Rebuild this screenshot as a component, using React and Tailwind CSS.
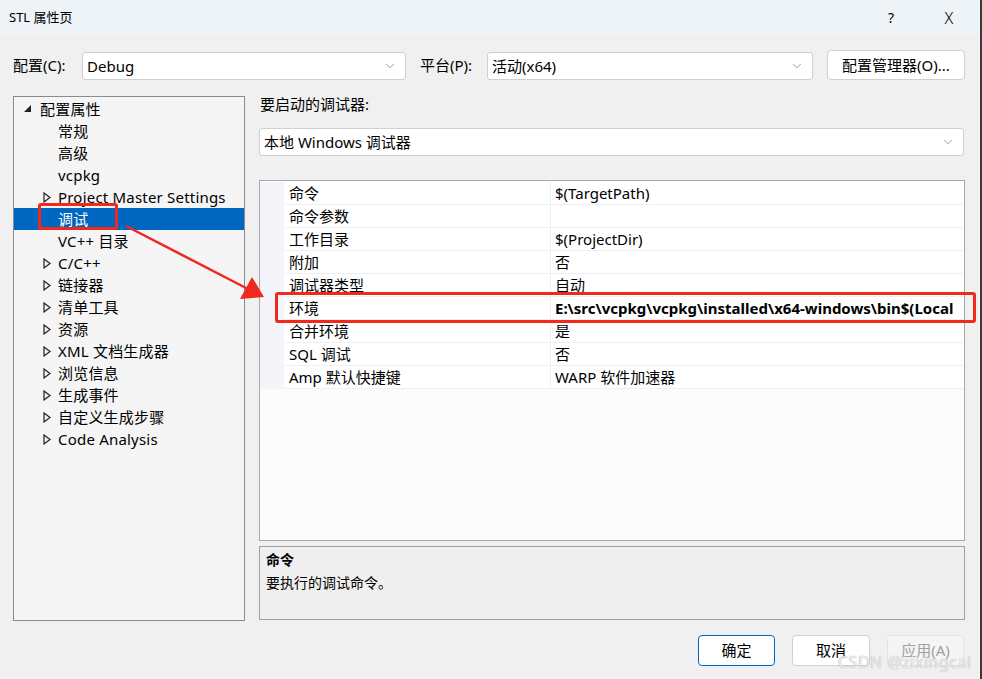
import React from "react";
import { ChevronDown } from "lucide-react";

const font = { fontFamily: '"Noto Sans", "Noto Sans CJK SC", sans-serif' };

const treeItems = [
  { label: "配置属性", level: 0, open: true },
  { label: "常规" },
  { label: "高级" },
  { label: "vcpkg" },
  { label: "Project Master Settings", arrow: true },
  { label: "调试", selected: true },
  { label: "VC++ 目录" },
  { label: "C/C++", arrow: true },
  { label: "链接器", arrow: true },
  { label: "清单工具", arrow: true },
  { label: "资源", arrow: true },
  { label: "XML 文档生成器", arrow: true },
  { label: "浏览信息", arrow: true },
  { label: "生成事件", arrow: true },
  { label: "自定义生成步骤", arrow: true },
  { label: "Code Analysis", arrow: true },
];

const props = [
  ["命令", "$(TargetPath)"],
  ["命令参数", ""],
  ["工作目录", "$(ProjectDir)"],
  ["附加", "否"],
  ["调试器类型", "自动"],
  ["环境", "E:\\src\\vcpkg\\vcpkg\\installed\\x64-windows\\bin$(Local", true],
  ["合并环境", "是"],
  ["SQL 调试", "否"],
  ["Amp 默认快捷键", "WARP 软件加速器"],
];

const Combo = ({ value, className }) => (
  <div
    className={`h-[28px] bg-white border border-[#d0d0d0] rounded-[3px] flex items-center pl-[4px] pr-[8px] ${className}`}
  >
    <span className="flex-1 text-[15px] text-black">{value}</span>
    <ChevronDown size={14} strokeWidth={1} className="text-[#555]" />
  </div>
);

const TreeRow = ({ item }) => (
  <div
    className={`h-[22px] flex items-center text-[15px] leading-[22px] tracking-[0.2px] ${
      item.selected ? "bg-[#0067c0] text-white" : "text-black"
    }`}
  >
    {item.level === 0 ? (
      <div className="w-[25px] flex justify-end pr-[7px] pb-[2px]">
        <svg width="9" height="9" viewBox="0 0 9 9">
          <polygon points="8,1 8,8 1,8" fill="#222" />
        </svg>
      </div>
    ) : (
      <div className="w-[43px] flex justify-end pr-[6px]">
        {item.arrow && (
          <svg width="8" height="11" viewBox="0 0 8 11">
            <polygon points="1,1 7,5.5 1,10" fill="none" stroke="#222" strokeWidth="1.2" />
          </svg>
        )}
      </div>
    )}
    <span className="pl-[1px]">{item.label}</span>
  </div>
);

export default function App() {
  return (
    <div
      className="w-[982px] h-[679px] relative bg-[#f0f0f0] flex flex-col overflow-hidden border-r-2 border-[#3a3a3a]"
      style={font}
    >
      {/* Title bar */}
      <div className="h-[35px] bg-[#eef3f8] flex items-center px-[9px] text-[13px] text-black">
        <span className="flex-1">STL 属性页</span>
        <span className="w-[20px] text-center text-[14px] mr-[38px]">?</span>
        <span className="w-[20px] text-center text-[16px] font-light mr-[12px]">X</span>
      </div>

      {/* Config row */}
      <div className="h-[30px] mt-[15px] flex items-center pl-[13px] text-[15px] text-black">
        <span className="w-[69px]">配置(C):</span>
        <Combo value="Debug" className="w-[324px] mt-[2px]" />
        <span className="w-[67px] ml-[14px]">平台(P):</span>
        <Combo value="活动(x64)" className="w-[326px] mt-[2px]" />
        <div className="ml-[14px] w-[138px] h-[30px] bg-white border border-[#d0d0d0] rounded-[4px] flex items-center justify-center">
          配置管理器(O)...
        </div>
      </div>

      {/* Main */}
      <div className="flex mt-[16px] pl-[13px] h-[525px]">
        <div className="w-[232px] h-full bg-[#f5f5f5] border border-[#8a8a90] pt-[1px]">
          {treeItems.map((it) => (
            <TreeRow key={it.label} item={it} />
          ))}
        </div>

        <div className="ml-[14px] w-[706px] flex flex-col">
          <div className="h-[16px] text-[15px] leading-[16px] pl-[1px] text-black">要启动的调试器:</div>
          <Combo value="本地 Windows 调试器" className="w-[705px] mt-[16px] border-[#c8c8c8] rounded-[2px] pl-[3px]" />

          <div className="mt-[24px] h-[361px] bg-white border border-[#a8a8a8] flex flex-col pt-[1px]">
            {props.map(([name, value, bold]) => (
              <div key={name} className="h-[23px] flex text-[15px] leading-[23px]">
                <div className="w-[24px] bg-[#f3f5fa]" />
                <div className="w-[267px] pl-[5px] border-b border-r border-[#eeeef4] text-black whitespace-nowrap overflow-hidden">
                  {name}
                </div>
                <div
                  className={`flex-1 pl-[4px] border-b border-[#eeeef4] text-black whitespace-nowrap overflow-hidden ${
                    bold ? "font-bold" : ""
                  }`}
                >
                  {value}
                </div>
              </div>
            ))}
            <div className="flex-1 bg-[#fcfcfc]" />
          </div>

          <div className="mt-[5px] h-[74px] bg-[#efefef] border border-[#a0a0a0] px-[6px] pt-[3px] text-[14px] text-black">
            <div className="font-bold leading-[20px]">命令</div>
            <div className="leading-[22px] mt-[2px]">要执行的调试命令。</div>
          </div>
        </div>
      </div>

      {/* Buttons */}
      <div className="flex justify-end pr-[16px] mt-[14px] gap-[17px] text-[15px]">
        <div className="w-[77px] h-[31px] bg-white border border-[#0067c0] rounded-[4px] flex items-center justify-center text-black">
          确定
        </div>
        <div className="w-[78px] h-[31px] bg-white border border-[#d0d0d0] rounded-[4px] flex items-center justify-center text-black">
          取消
        </div>
        <div className="w-[77px] h-[31px] bg-[#f5f5f5] border border-[#e4e4e4] rounded-[4px] flex items-center justify-center text-[#a0a0a0]">
          应用(A)
        </div>
      </div>

      {/* Watermark */}
      <div className="absolute left-[838px] top-[650px] text-[16px] text-[#ffffff]/80 tracking-[0.5px] [text-shadow:0_0_1px_#888]">
        CSDN @zixingcai
      </div>

      {/* Red annotations */}
      <div className="absolute left-[38px] top-[203px] w-[80px] h-[27px] border-[3px] border-[#f0281e] rounded-[3px]" />
      <div className="absolute left-[275px] top-[292px] w-[701px] h-[31px] border-[3px] border-[#f0281e] rounded-[3px]" />
      <svg className="absolute left-0 top-0 pointer-events-none" width="982" height="679">
        <line x1="126" y1="226" x2="248" y2="289" stroke="#f0281e" strokeWidth="2.5" />
        <polygon points="264,297 240,299 252,277" fill="#f0281e" />
      </svg>
    </div>
  );
}
